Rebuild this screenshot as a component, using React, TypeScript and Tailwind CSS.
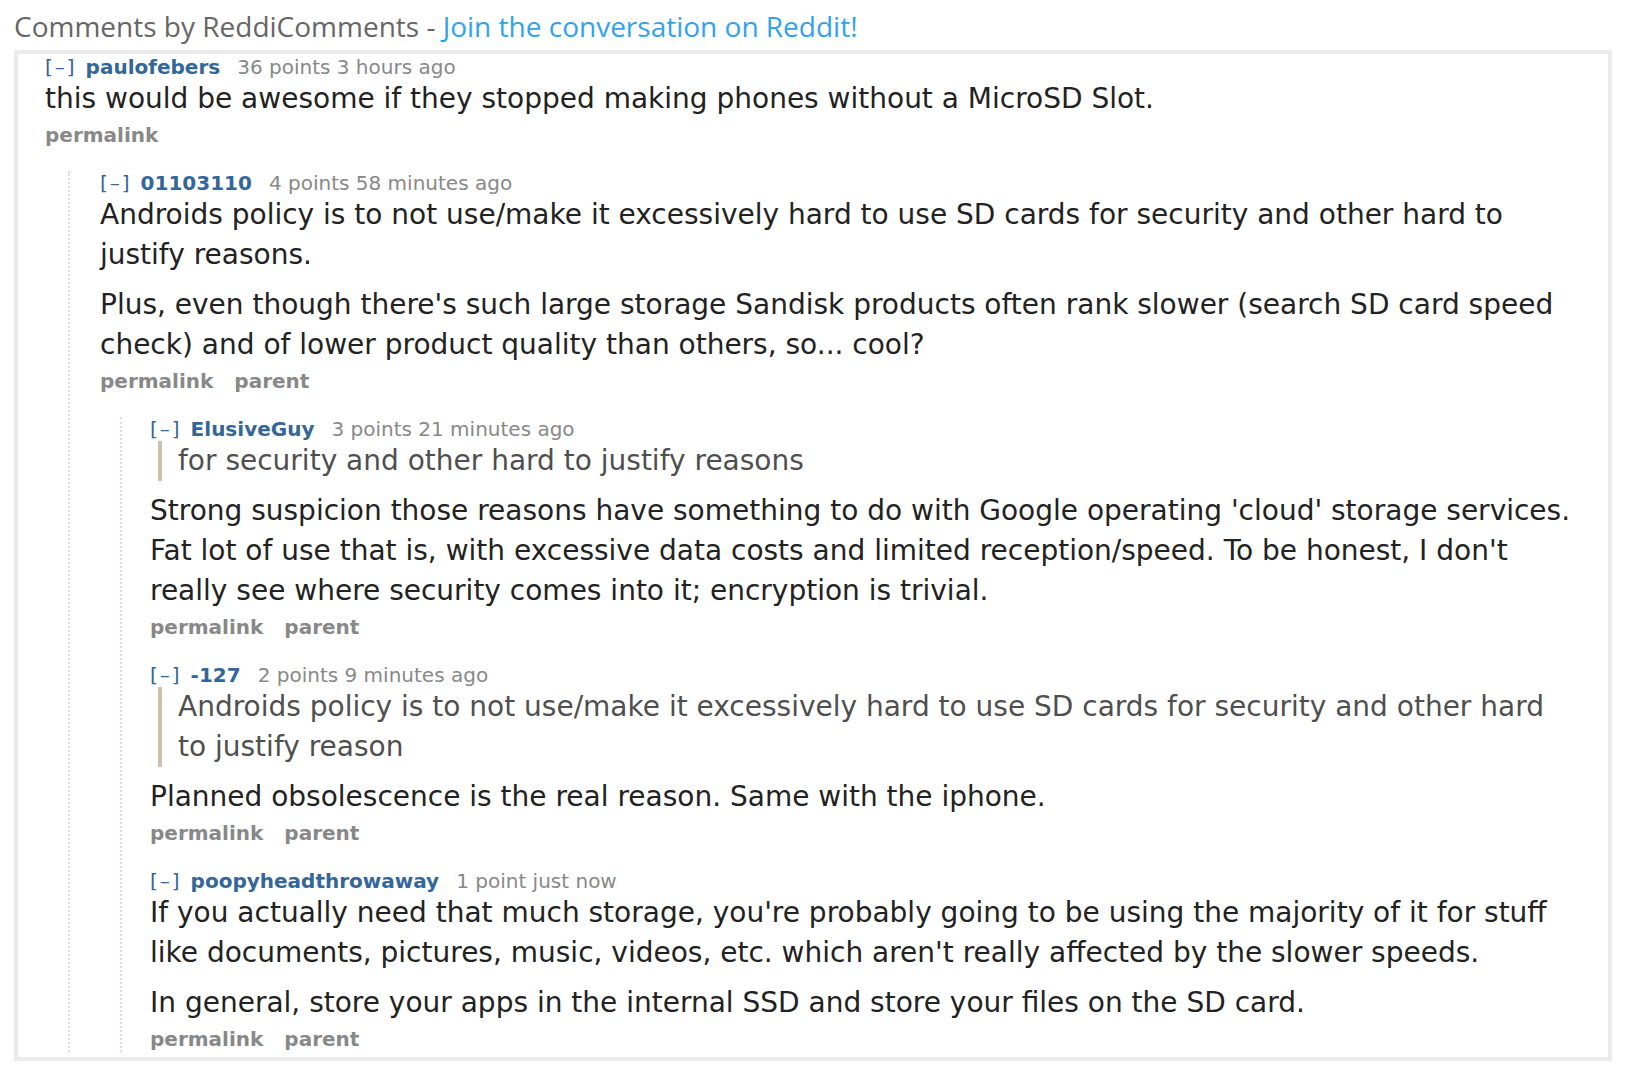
import React from "react";

type C = {
  user: string;
  meta: string;
  quote?: string;
  paras: string[];
  parent?: boolean;
  children?: C[];
};

const data: C = {
  user: "paulofebers",
  meta: "36 points 3 hours ago",
  paras: ["this would be awesome if they stopped making phones without a MicroSD Slot."],
  children: [
    {
      user: "01103110",
      meta: "4 points 58 minutes ago",
      parent: true,
      paras: [
        "Androids policy is to not use/make it excessively hard to use SD cards for security and other hard to justify reasons.",
        "Plus, even though there's such large storage Sandisk products often rank slower (search SD card speed check) and of lower product quality than others, so... cool?",
      ],
      children: [
        {
          user: "ElusiveGuy",
          meta: "3 points 21 minutes ago",
          parent: true,
          quote: "for security and other hard to justify reasons",
          paras: [
            "Strong suspicion those reasons have something to do with Google operating 'cloud' storage services. Fat lot of use that is, with excessive data costs and limited reception/speed. To be honest, I don't really see where security comes into it; encryption is trivial.",
          ],
        },
        {
          user: "-127",
          meta: "2 points 9 minutes ago",
          parent: true,
          quote:
            "Androids policy is to not use/make it excessively hard to use SD cards for security and other hard to justify reason",
          paras: ["Planned obsolescence is the real reason. Same with the iphone."],
        },
        {
          user: "poopyheadthrowaway",
          meta: "1 point just now",
          parent: true,
          paras: [
            "If you actually need that much storage, you're probably going to be using the majority of it for stuff like documents, pictures, music, videos, etc. which aren't really affected by the slower speeds.",
            "In general, store your apps in the internal SSD and store your files on the SD card.",
          ],
        },
      ],
    },
  ],
};

function Comment({ c, level, first }: { c: C; level: number; first?: boolean }) {
  return (
    <div className={first ? "" : "mt-[23px]"}>
      <div className="text-[20px] leading-[24px] whitespace-nowrap">
        <span className="text-[#336699] tracking-[2px]">[–]</span>
        <span className="ml-[9px] font-bold text-[#336699]">{c.user}</span>
        <span className="ml-[17px] text-[#888888]">{c.meta}</span>
      </div>
      {c.quote && (
        <div className="ml-[8px] mb-[10px] border-l-4 border-[#c5c1ad] pl-[16px] text-[28px] leading-[40px] text-[#4f4f4f]">
          {c.quote}
        </div>
      )}
      {c.paras.map((p, i) => (
        <p key={i} className={"text-[28px] leading-[40px] text-[#222222] " + (i > 0 ? "mt-[10px]" : "")}>
          {p}
        </p>
      ))}
      <div className="mt-[3px] text-[20px] leading-[26px] font-bold text-[#888888]">
        <span>permalink</span>
        {c.parent && <span className="ml-[21px]">parent</span>}
      </div>
      {c.children && c.children.length > 0 && (
        <div
          className={
            "mt-[23px] border-l-2 border-dotted border-[#d8d8f8] " +
            (level === 0 ? "ml-[23px] pl-[30px]" : "ml-[20px] pl-[28px]")
          }
        >
          {c.children.map((ch, i) => (
            <Comment key={i} c={ch} level={level + 1} first={i === 0} />
          ))}
        </div>
      )}
    </div>
  );
}

export default function App() {
  return (
    <div className="bg-white min-h-[1072px] w-[1626px] px-[14px]" style={{ fontFamily: "'DejaVu Sans', Verdana, sans-serif" }}>
      <div
        className="pt-[8px] pb-[6px] text-[28px] leading-[36px] text-[#666666] whitespace-nowrap"
        style={{ fontFamily: "'Open Sans', sans-serif" }}
      >
        Comments by ReddiComments - <span className="text-[#2ea3f2]">Join the conversation on Reddit!</span>
      </div>
      <div className="w-[1598px] border-4 border-[#ebebeb] pl-[27px] pr-[30px] pt-[1px] pb-[5px]">
        <Comment c={data} level={0} first />
      </div>
    </div>
  );
}
